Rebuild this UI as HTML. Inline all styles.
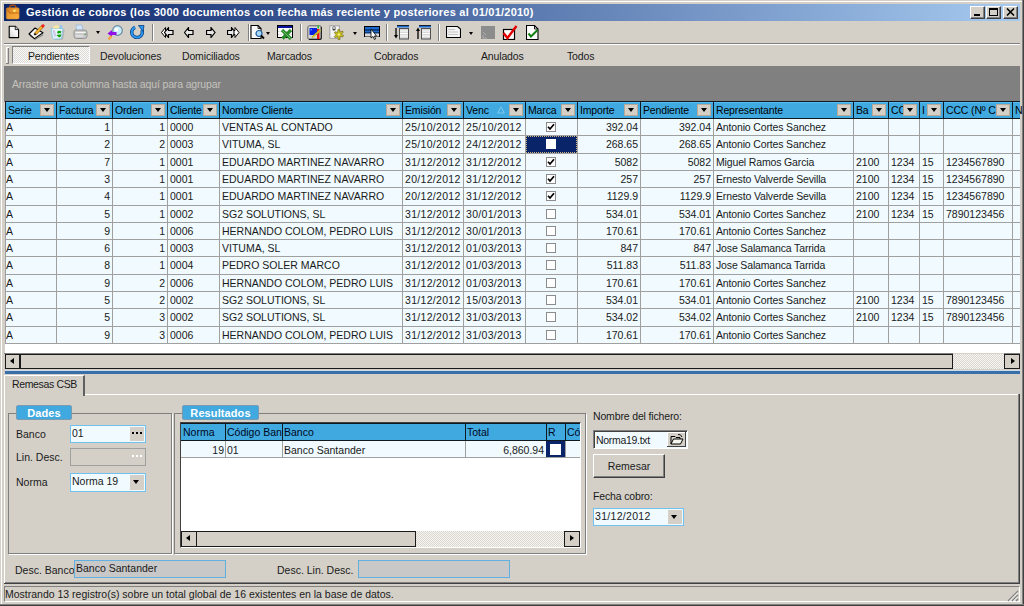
<!DOCTYPE html><html><head><meta charset="utf-8"><style>
*{box-sizing:border-box;margin:0;padding:0}
html,body{width:1024px;height:606px;overflow:hidden;background:#D4D0C8;font-family:"Liberation Sans", sans-serif;font-size:10.5px;color:#1a1a1a}
.d{letter-spacing:0.3px}
.l{letter-spacing:-0.15px}
.a{position:absolute}
.t{position:absolute;white-space:nowrap;line-height:12px}
.r3{border-top:1px solid #fff;border-left:1px solid #fff;border-right:1px solid #404040;border-bottom:1px solid #404040;background:#D4D0C8;box-shadow:inset -1px -1px 0 #808080}
.dd{position:absolute;background:#D4D0C8;border-top:1px solid #fff;border-left:1px solid #fff;border-right:1px solid #808080;border-bottom:1px solid #808080}
.dd:after{content:"";position:absolute;left:3px;top:4px;border-left:4px solid transparent;border-right:4px solid transparent;border-top:4px solid #000}
</style></head><body>

<div class="a" style="left:1px;top:1px;width:1022px;height:1px;background:#fff"></div>
<div class="a" style="left:1px;top:1px;width:1px;height:604px;background:#fff"></div>
<div class="a" style="left:1022px;top:0;width:1px;height:606px;background:#808080"></div>
<div class="a" style="left:1023px;top:0;width:1px;height:606px;background:#404040"></div>
<div class="a" style="left:0;top:604px;width:1024px;height:1px;background:#808080"></div>
<div class="a" style="left:0;top:605px;width:1024px;height:1px;background:#404040"></div>
<div class="a" style="left:4px;top:4px;width:1016px;height:17px;background:linear-gradient(to right,#0A246A,#A6CAF0)"></div>
<svg class="a" style="left:5px;top:4px" width="15" height="16" viewBox="0 0 15 16">
<defs><linearGradient id="bg1" x1="0" y1="0" x2="1" y2="1"><stop offset="0" stop-color="#d07820"/><stop offset="0.5" stop-color="#f0a030"/><stop offset="1" stop-color="#ffb040"/></linearGradient></defs>
<path d="M4.8 4.5 V2.8 Q4.8 1.2 6.5 1.2 H9 Q10.8 1.2 10.8 2.8 V4.5" fill="none" stroke="#a04810" stroke-width="1.5"/>
<rect x="1.3" y="3.8" width="12.8" height="11.2" rx="1.5" fill="url(#bg1)"/>
<path d="M1.5 5 L5 9 H14" fill="none" stroke="#b86010" stroke-width="0.8"/>
<rect x="1.3" y="3.8" width="12.8" height="11.2" rx="1.5" fill="none" stroke="#c88838" stroke-width="0.6"/>
<circle cx="9.5" cy="6.8" r="1.2" fill="#fff080"/>
</svg>
<div class="t" style="left:26px;top:6px;color:#fff;font-weight:bold;font-size:11px;line-height:13px;letter-spacing:0.24px">Gestión de cobros (los 3000 documentos con fecha más reciente y posteriores al 01/01/2010)</div>
<div class="a r3" style="left:970px;top:6px;width:15px;height:13px"></div>
<div class="a r3" style="left:986px;top:6px;width:15px;height:13px"></div>
<div class="a r3" style="left:1003px;top:6px;width:15px;height:13px"></div>
<div class="a" style="left:974px;top:14px;width:6px;height:2px;background:#000"></div>
<div class="a" style="left:989px;top:8px;width:9px;height:8px;border:1px solid #000;border-top-width:2px"></div>
<svg class="a" style="left:1006px;top:8px" width="9" height="8" viewBox="0 0 9 8"><path d="M1 0.5 L8 7.5 M8 0.5 L1 7.5" stroke="#000" stroke-width="1.6"/></svg>
<svg class="a" style="left:8px;top:25px" width="12" height="14" viewBox="0 0 12 14"><defs><linearGradient id="ng" x1="0" y1="1" x2="1" y2="0"><stop offset="0" stop-color="#d0d0d0"/><stop offset="0.5" stop-color="#f4f4f4"/><stop offset="1" stop-color="#fff"/></linearGradient></defs><path d="M1.2 1.2 H7.2 L10.6 4.6 V12.6 H1.2 Z" fill="url(#ng)" stroke="#000" stroke-width="1.1" stroke-linejoin="round"/><path d="M7.2 1.2 V4.6 H10.6" fill="#c8c8c8" stroke="#000" stroke-width="0.8"/></svg>
<svg class="a" style="left:28px;top:24px" width="17" height="16" viewBox="0 0 17 16"><path d="M2 11.5 L7 15 L15.5 10 L15 11.5 L7 16 L1.5 12 Z" fill="#808080"/><path d="M1 10 L7 4 L15 8.8 L6.5 14.6 Z" fill="#f4f4f4" stroke="#000" stroke-width="1.1" stroke-linejoin="round"/><path d="M7.2 10 L14.6 2.2" stroke="#b06010" stroke-width="3"/><path d="M7.2 10 L14.6 2.2" stroke="#f0c030" stroke-width="1.8"/><path d="M13.8 3 L16 0.8" stroke="#f02020" stroke-width="2.6"/><path d="M6.4 10.8 L7.6 9.6" stroke="#000" stroke-width="1.8"/></svg>
<svg class="a" style="left:50px;top:24px" width="16" height="16" viewBox="0 0 16 16"><path d="M1.5 5 H13.5 L12 14.5 Q11.5 15.5 10 15.5 H5 Q3.5 15.5 3 14.5 Z" fill="#5a6a7a" opacity="0.25" transform="translate(1.2,0.5)"/><path d="M1 4.5 H13 L11.5 14 Q11 15 9.5 15 H4.5 Q3 15 2.5 14 Z" fill="#e4f6fc" stroke="#90c8e8" stroke-width="1"/><path d="M3 3.5 Q5 0.5 8.5 1.5 L9 4.5 H3 Z" fill="#f8e8a0"/><path d="M9.5 4.5 L10 1 L12.5 1.5 L12 4.5 Z" fill="#90c8f0"/><path d="M3 6 L5 13 M4 6 L6 12" stroke="#c0b0e0" stroke-width="0.8"/><path d="M7 8 Q9 6 11.5 7.5 L10.5 9.5 Q9 8.5 8 10 Z M6.5 11 L9 13.5 Q11 13 11.5 10.5 L9.5 10.5 Z" fill="#10a010"/></svg>
<svg class="a" style="left:73px;top:24px" width="15" height="16" viewBox="0 0 15 16"><path d="M3 1 H9 L10 6.5 H3.5 Z" fill="#d0e4fc" stroke="#a0b8d8" stroke-width="0.8"/><path d="M1 7.5 Q1 6 3 6 H11.5 Q14 6 14 8.5 V12 Q14 14.5 11.5 14.5 H3.5 Q1 14.5 1 12 Z" fill="#c8c8c8" stroke="#8c8c8c" stroke-width="0.9"/><path d="M2.5 8.5 H12.5" stroke="#f4f4f4" stroke-width="1.2"/><path d="M2.5 12 H10" stroke="#f0f0f0" stroke-width="1"/><rect x="11.5" y="9.5" width="1.5" height="1.5" fill="#60a060"/></svg>
<div class="a" style="left:96px;top:31px;width:0;height:0;border-left:2.5px solid transparent;border-right:2.5px solid transparent;border-top:3px solid #000"></div>
<svg class="a" style="left:107px;top:25px" width="16" height="15" viewBox="0 0 16 15"><circle cx="10.5" cy="5.5" r="4.8" fill="#c8ecfa" stroke="#6a8aa0" stroke-width="1.2"/><circle cx="9.5" cy="4.5" r="2" fill="#fff"/><path d="M0.5 8.5 L5 5 V7 H9.5 V10 H5 V12 Z" fill="#9010e8"/><path d="M4.5 11 L1.5 14.5" stroke="#f0a040" stroke-width="2.4"/></svg>
<svg class="a" style="left:130px;top:25px" width="15" height="14" viewBox="0 0 15 14"><path d="M5.1 2.3 A5.3 5.3 0 1 0 11.8 4.9" fill="none" stroke="#0a3a80" stroke-width="3.4"/><path d="M5.1 2.3 A5.3 5.3 0 1 0 11.8 4.9" fill="none" stroke="#2a9af0" stroke-width="2"/><path d="M8.5 0.5 L14 0.5 L13 6.5 Z" fill="#2a9af0" stroke="#0a3a80" stroke-width="0.8"/></svg>
<div class="a" style="left:152px;top:24px;width:1px;height:17px;background:#808080"></div><div class="a" style="left:153px;top:24px;width:1px;height:17px;background:#fff"></div>
<svg class="a" style="left:161px;top:27px" width="13" height="11" viewBox="0 0 13 11"><path d="M4.5 0.5 L0.5 5.5 L4.5 10.5 V7.5 H6 V3.5 H4.5 Z" fill="#fff" stroke="#000" stroke-width="1"/><path d="M7.5 0.5 L3.5 5.5 L7.5 10.5 V7.5 H12 V3.5 H7.5 Z" fill="#e8e8e8" stroke="#000" stroke-width="1.2"/></svg>
<svg class="a" style="left:184px;top:27px" width="10" height="11" viewBox="0 0 10 11"><path d="M4.5 0.5 L0.5 5.5 L4.5 10.5 V7.5 H9 V3.5 H4.5 Z" fill="#e8e8e8" stroke="#000" stroke-width="1.2"/></svg>
<svg class="a" style="left:206px;top:27px" width="10" height="11" viewBox="0 0 10 11"><path d="M5 0.5 L9 5.5 L5 10.5 V7.5 H0.5 V3.5 H5 Z" fill="#e8e8e8" stroke="#000" stroke-width="1.2"/></svg>
<svg class="a" style="left:227px;top:27px" width="13" height="11" viewBox="0 0 13 11"><path d="M4.5 0.5 L8.5 5.5 L4.5 10.5 V7.5 H0.5 V3.5 H4.5 Z" fill="#e8e8e8" stroke="#000" stroke-width="1.2"/><path d="M8 0.5 L12 5.5 L8 10.5 V7.5 H7 V3.5 H8 Z" fill="#fff" stroke="#000" stroke-width="1"/></svg>
<div class="a" style="left:248px;top:24px;width:1px;height:17px;background:#808080"></div><div class="a" style="left:249px;top:24px;width:1px;height:17px;background:#fff"></div>
<svg class="a" style="left:250px;top:25px" width="15" height="15" viewBox="0 0 15 15"><path d="M1 0.5 H8 L11 3.5 V13.5 H1 Z" fill="#f8f8f8" stroke="#000" stroke-width="1.1"/><path d="M8 0.5 V3.5 H11" fill="none" stroke="#000" stroke-width="0.8"/><circle cx="9" cy="8.5" r="3" fill="#a8d8f8" stroke="#2060a0" stroke-width="1.2"/><path d="M11 10.5 L14 13.5" stroke="#000" stroke-width="1.8"/></svg>
<div class="a" style="left:266px;top:32px;width:0;height:0;border-left:2.5px solid transparent;border-right:2.5px solid transparent;border-top:3px solid #000"></div>
<svg class="a" style="left:277px;top:25px" width="16" height="15" viewBox="0 0 16 15"><rect x="0.5" y="0.5" width="15" height="12" fill="#fff" stroke="#000" stroke-width="1"/><rect x="1" y="1" width="14" height="2" fill="#0a10a0"/><path d="M1 6.5 H15 M1 9.5 H15" stroke="#c8c8c8" stroke-width="0.8" stroke-dasharray="1.5 1"/><path d="M5 5 L14 14 M14 5 L5.5 13.5" stroke="#2a8a2a" stroke-width="3.2"/><path d="M5.5 5.5 L13.5 13.5" stroke="#70c070" stroke-width="1"/></svg>
<div class="a" style="left:300px;top:24px;width:1px;height:17px;background:#808080"></div><div class="a" style="left:301px;top:24px;width:1px;height:17px;background:#fff"></div>
<svg class="a" style="left:307px;top:25px" width="15" height="15" viewBox="0 0 15 15"><rect x="0.8" y="0.8" width="13.5" height="13.5" rx="1.5" fill="#d8d8d8" stroke="#606060" stroke-width="1"/><path d="M14.3 2 V13 Q14.3 14.3 13 14.3 H2" fill="none" stroke="#202020" stroke-width="1.2"/><rect x="2.5" y="3" width="7.5" height="7" fill="#0a20e0"/><rect x="3.5" y="4" width="1.5" height="1.5" fill="#40a0ff"/><path d="M10 4 L12.5 4 L12.5 14 L10 14 Z" fill="#f01010"/><path d="M10.5 0.5 L12 0.5 L12 3.5 L10.5 3.5 Z" fill="#20c020"/><path d="M5 12.5 L13.5 5" stroke="#c8c020" stroke-width="1.8"/></svg>
<svg class="a" style="left:329px;top:25px" width="15" height="16" viewBox="0 0 15 16"><rect x="0.8" y="0.8" width="9.5" height="12.5" fill="#f4f4f4" stroke="#a0a0a0" stroke-width="1"/><rect x="3.5" y="1.5" width="3" height="4" rx="1" fill="#404040"/><circle cx="5" cy="3" r="0.9" fill="#fff"/><g fill="#c8c020" stroke="#686010" stroke-width="0.6"><path d="M9 4.5 L10.5 4.5 L11 7 L13.5 6 L14.3 7.3 L12.3 9 L14.5 10.5 L13.8 12 L11.2 11.3 L11 14.5 L9.2 14.5 L8.7 11.7 L6.2 12.8 L5.3 11.5 L7.3 9.7 L5.3 8 L6.2 6.7 L8.5 7.5 Z"/></g><circle cx="9.9" cy="9.6" r="1.2" fill="#f8f080"/></svg>
<div class="a" style="left:353px;top:32px;width:0;height:0;border-left:2.5px solid transparent;border-right:2.5px solid transparent;border-top:3px solid #000"></div>
<svg class="a" style="left:364px;top:26px" width="16" height="14" viewBox="0 0 16 14"><rect x="0.5" y="0.5" width="15" height="10" fill="#1a6ad0" stroke="#000" stroke-width="1"/><path d="M1 4 H15 M1 7 H15" stroke="#000" stroke-width="0.8"/><rect x="1" y="7.5" width="14" height="3" fill="#d8d8d8"/><path d="M7 3 V12 L9 10.5 L10.5 13.5 L11.5 13 L10.5 10 H12.5 Z" fill="#fff" stroke="#000" stroke-width="0.8"/></svg>
<div class="a" style="left:386px;top:24px;width:1px;height:17px;background:#808080"></div><div class="a" style="left:387px;top:24px;width:1px;height:17px;background:#fff"></div>
<svg class="a" style="left:394px;top:25px" width="15" height="15" viewBox="0 0 15 15"><rect x="3" y="0.5" width="12" height="2" fill="#1a6ad0"/><rect x="3" y="0" width="12" height="0.8" fill="#000"/><rect x="5.5" y="3.5" width="9" height="10.5" fill="#d8d8d8" stroke="#505050" stroke-width="1"/><path d="M6 6 H14 M6 8.5 H14 M6 11 H14" stroke="#fff" stroke-width="1"/><path d="M2 3 V12" stroke="#000" stroke-width="1.3"/><path d="M0 10 L2 13.5 L4 10 Z" fill="#000"/></svg>
<svg class="a" style="left:416px;top:25px" width="15" height="15" viewBox="0 0 15 15"><rect x="3" y="0.5" width="12" height="2" fill="#1a6ad0"/><rect x="3" y="0" width="12" height="0.8" fill="#000"/><rect x="5.5" y="3.5" width="9" height="10.5" fill="#d8d8d8" stroke="#505050" stroke-width="1"/><path d="M6 6 H14 M6 8.5 H14 M6 11 H14" stroke="#fff" stroke-width="1"/><path d="M2 5 V14" stroke="#000" stroke-width="1.3"/><path d="M0 6 L2 2.5 L4 6 Z" fill="#000"/></svg>
<div class="a" style="left:438px;top:24px;width:1px;height:17px;background:#808080"></div><div class="a" style="left:439px;top:24px;width:1px;height:17px;background:#fff"></div>
<svg class="a" style="left:446px;top:26px" width="15" height="12" viewBox="0 0 15 12"><path d="M0.5 0.5 H11.5 L14.5 3 V11.5 H0.5 Z" fill="#f4f4f4" stroke="#000" stroke-width="1.1"/><path d="M2 3.5 H9 M2 6 H12 M2 8.5 H12" stroke="#b8b8b8" stroke-width="0.8"/></svg>
<div class="a" style="left:469px;top:32px;width:0;height:0;border-left:2.5px solid transparent;border-right:2.5px solid transparent;border-top:3px solid #000"></div>
<div class="a" style="left:481px;top:26px;width:14px;height:13px;background:#8c8c8c"></div>
<svg class="a" style="left:481px;top:26px" width="14" height="13" viewBox="0 0 14 13"><path d="M2 6 L5 9 M2 9 V12 H6" stroke="#b0b0b0" stroke-width="1" fill="none"/></svg>
<svg class="a" style="left:502px;top:25px" width="16" height="15" viewBox="0 0 16 15"><rect x="1.5" y="4.5" width="11" height="10" fill="#fff" stroke="#000" stroke-width="1.2"/><path d="M1.5 8 L5.5 13 L14.5 1" fill="none" stroke="#e00000" stroke-width="2.4"/></svg>
<svg class="a" style="left:526px;top:25px" width="13" height="15" viewBox="0 0 13 15"><path d="M0.5 0.5 H8.5 L12 4 V14.5 H0.5 Z" fill="#fff" stroke="#000" stroke-width="1.1"/><path d="M8.5 0.5 V4 H12" fill="none" stroke="#000" stroke-width="0.9"/><path d="M2.5 8.5 L5 11.5 L11.5 5" fill="none" stroke="#108010" stroke-width="2"/></svg>
<div class="a" style="left:4px;top:43px;width:1016px;height:1px;background:#808080"></div><div class="a" style="left:4px;top:44px;width:1016px;height:1px;background:#fff"></div>
<div class="a" style="left:6px;top:47px;width:1px;height:17px;background:#fff"></div><div class="a" style="left:8px;top:47px;width:1px;height:17px;background:#808080"></div><div class="a" style="left:6px;top:63px;width:3px;height:1px;background:#808080"></div><div class="a" style="left:6px;top:47px;width:3px;height:1px;background:#fff"></div>
<div class="a" style="left:12px;top:46px;width:78px;height:18px;border-top:1px solid #808080;border-left:1px solid #808080;border-bottom:1px solid #fff;border-right:1px solid #fff;background-color:#E8E6E2;background-image:repeating-conic-gradient(#F8F8F6 0 25%,#DDDBD5 0 50%);background-size:2px 2px"></div>
<div class="t l" style="left:28px;top:50px;width:54px;font-size:10.5px">Pendientes</div>
<div class="t l" style="left:100px;top:50px;width:66px;font-size:10.5px">Devoluciones</div>
<div class="t l" style="left:182px;top:50px;width:61px;font-size:10.5px">Domiciliados</div>
<div class="t l" style="left:267px;top:50px;width:48px;font-size:10.5px">Marcados</div>
<div class="t l" style="left:374px;top:50px;width:47px;font-size:10.5px">Cobrados</div>
<div class="t l" style="left:481px;top:50px;width:47px;font-size:10.5px">Anulados</div>
<div class="t l" style="left:567px;top:50px;width:32px;font-size:10.5px">Todos</div>
<div class="a" style="left:4px;top:66px;width:1016px;height:36px;background:#808080"></div>
<div class="t l" style="left:12px;top:78px;color:#C4C2BC;font-size:10.5px">Arrastre una columna hasta aquí para agrupar</div>
<div class="a" style="left:5px;top:101px;width:1015px;height:18px;background:#40A9E0;border-top:1px solid #101820;border-bottom:1px solid #101820"></div>
<div class="a" style="left:5px;top:102px;width:1015px;height:1px;background:#58BDF2"></div>
<div class="a" style="left:5px;top:119px;width:1015px;height:234px;background:#fff"></div>
<div class="a" style="left:5px;top:119px;width:1015px;height:225px;background:#F0FAFF"></div>
<div class="a" style="left:5px;top:135px;width:1015px;height:1px;background:#A0A0A0"></div>
<div class="a" style="left:5px;top:153px;width:1015px;height:1px;background:#A0A0A0"></div>
<div class="a" style="left:5px;top:170px;width:1015px;height:1px;background:#A0A0A0"></div>
<div class="a" style="left:5px;top:187px;width:1015px;height:1px;background:#A0A0A0"></div>
<div class="a" style="left:5px;top:205px;width:1015px;height:1px;background:#A0A0A0"></div>
<div class="a" style="left:5px;top:222px;width:1015px;height:1px;background:#A0A0A0"></div>
<div class="a" style="left:5px;top:239px;width:1015px;height:1px;background:#A0A0A0"></div>
<div class="a" style="left:5px;top:256px;width:1015px;height:1px;background:#A0A0A0"></div>
<div class="a" style="left:5px;top:274px;width:1015px;height:1px;background:#A0A0A0"></div>
<div class="a" style="left:5px;top:291px;width:1015px;height:1px;background:#A0A0A0"></div>
<div class="a" style="left:5px;top:308px;width:1015px;height:1px;background:#A0A0A0"></div>
<div class="a" style="left:5px;top:326px;width:1015px;height:1px;background:#A0A0A0"></div>
<div class="a" style="left:5px;top:343px;width:1015px;height:1px;background:#A0A0A0"></div>
<div class="a" style="left:5px;top:102px;width:1px;height:16px;background:#101820"></div>
<div class="a" style="left:5px;top:119px;width:1px;height:225px;background:#A0A0A0"></div>
<div class="a" style="left:56px;top:102px;width:1px;height:16px;background:#101820"></div>
<div class="a" style="left:56px;top:119px;width:1px;height:225px;background:#A0A0A0"></div>
<div class="a" style="left:112px;top:102px;width:1px;height:16px;background:#101820"></div>
<div class="a" style="left:112px;top:119px;width:1px;height:225px;background:#A0A0A0"></div>
<div class="a" style="left:167px;top:102px;width:1px;height:16px;background:#101820"></div>
<div class="a" style="left:167px;top:119px;width:1px;height:225px;background:#A0A0A0"></div>
<div class="a" style="left:219px;top:102px;width:1px;height:16px;background:#101820"></div>
<div class="a" style="left:219px;top:119px;width:1px;height:225px;background:#A0A0A0"></div>
<div class="a" style="left:402px;top:102px;width:1px;height:16px;background:#101820"></div>
<div class="a" style="left:402px;top:119px;width:1px;height:225px;background:#A0A0A0"></div>
<div class="a" style="left:463px;top:102px;width:1px;height:16px;background:#101820"></div>
<div class="a" style="left:463px;top:119px;width:1px;height:225px;background:#A0A0A0"></div>
<div class="a" style="left:525px;top:102px;width:1px;height:16px;background:#101820"></div>
<div class="a" style="left:525px;top:119px;width:1px;height:225px;background:#A0A0A0"></div>
<div class="a" style="left:577px;top:102px;width:1px;height:16px;background:#101820"></div>
<div class="a" style="left:577px;top:119px;width:1px;height:225px;background:#A0A0A0"></div>
<div class="a" style="left:640px;top:102px;width:1px;height:16px;background:#101820"></div>
<div class="a" style="left:640px;top:119px;width:1px;height:225px;background:#A0A0A0"></div>
<div class="a" style="left:713px;top:102px;width:1px;height:16px;background:#101820"></div>
<div class="a" style="left:713px;top:119px;width:1px;height:225px;background:#A0A0A0"></div>
<div class="a" style="left:853px;top:102px;width:1px;height:16px;background:#101820"></div>
<div class="a" style="left:853px;top:119px;width:1px;height:225px;background:#A0A0A0"></div>
<div class="a" style="left:888px;top:102px;width:1px;height:16px;background:#101820"></div>
<div class="a" style="left:888px;top:119px;width:1px;height:225px;background:#A0A0A0"></div>
<div class="a" style="left:919px;top:102px;width:1px;height:16px;background:#101820"></div>
<div class="a" style="left:919px;top:119px;width:1px;height:225px;background:#A0A0A0"></div>
<div class="a" style="left:943px;top:102px;width:1px;height:16px;background:#101820"></div>
<div class="a" style="left:943px;top:119px;width:1px;height:225px;background:#A0A0A0"></div>
<div class="a" style="left:1012px;top:102px;width:1px;height:16px;background:#101820"></div>
<div class="a" style="left:1012px;top:119px;width:1px;height:225px;background:#A0A0A0"></div>
<div class="t l" style="left:8px;top:104px;width:32px;overflow:hidden;color:#000">Serie</div>
<div class="a" style="left:40px;top:104px;width:14px;height:12px;background:#D4D0C8;border:1px solid #B8A898"></div>
<div class="a" style="left:44px;top:108px;width:0;height:0;border-left:3.5px solid transparent;border-right:3.5px solid transparent;border-top:4px solid #000"></div>
<div class="t l" style="left:59px;top:104px;width:37px;overflow:hidden;color:#000">Factura</div>
<div class="a" style="left:96px;top:104px;width:14px;height:12px;background:#D4D0C8;border:1px solid #B8A898"></div>
<div class="a" style="left:100px;top:108px;width:0;height:0;border-left:3.5px solid transparent;border-right:3.5px solid transparent;border-top:4px solid #000"></div>
<div class="t l" style="left:115px;top:104px;width:36px;overflow:hidden;color:#000">Orden</div>
<div class="a" style="left:151px;top:104px;width:14px;height:12px;background:#D4D0C8;border:1px solid #B8A898"></div>
<div class="a" style="left:155px;top:108px;width:0;height:0;border-left:3.5px solid transparent;border-right:3.5px solid transparent;border-top:4px solid #000"></div>
<div class="t l" style="left:170px;top:104px;width:33px;overflow:hidden;color:#000">Cliente</div>
<div class="a" style="left:203px;top:104px;width:14px;height:12px;background:#D4D0C8;border:1px solid #B8A898"></div>
<div class="a" style="left:207px;top:108px;width:0;height:0;border-left:3.5px solid transparent;border-right:3.5px solid transparent;border-top:4px solid #000"></div>
<div class="t l" style="left:222px;top:104px;width:164px;overflow:hidden;color:#000">Nombre Cliente</div>
<div class="a" style="left:386px;top:104px;width:14px;height:12px;background:#D4D0C8;border:1px solid #B8A898"></div>
<div class="a" style="left:390px;top:108px;width:0;height:0;border-left:3.5px solid transparent;border-right:3.5px solid transparent;border-top:4px solid #000"></div>
<div class="t l" style="left:405px;top:104px;width:42px;overflow:hidden;color:#000">Emisión</div>
<div class="a" style="left:447px;top:104px;width:14px;height:12px;background:#D4D0C8;border:1px solid #B8A898"></div>
<div class="a" style="left:451px;top:108px;width:0;height:0;border-left:3.5px solid transparent;border-right:3.5px solid transparent;border-top:4px solid #000"></div>
<div class="t l" style="left:466px;top:104px;width:43px;overflow:hidden;color:#000">Venc</div>
<div class="a" style="left:509px;top:104px;width:14px;height:12px;background:#D4D0C8;border:1px solid #B8A898"></div>
<div class="a" style="left:513px;top:108px;width:0;height:0;border-left:3.5px solid transparent;border-right:3.5px solid transparent;border-top:4px solid #000"></div>
<div class="t l" style="left:528px;top:104px;width:33px;overflow:hidden;color:#000">Marca</div>
<div class="a" style="left:561px;top:104px;width:14px;height:12px;background:#D4D0C8;border:1px solid #B8A898"></div>
<div class="a" style="left:565px;top:108px;width:0;height:0;border-left:3.5px solid transparent;border-right:3.5px solid transparent;border-top:4px solid #000"></div>
<div class="t l" style="left:580px;top:104px;width:44px;overflow:hidden;color:#000">Importe</div>
<div class="a" style="left:624px;top:104px;width:14px;height:12px;background:#D4D0C8;border:1px solid #B8A898"></div>
<div class="a" style="left:628px;top:108px;width:0;height:0;border-left:3.5px solid transparent;border-right:3.5px solid transparent;border-top:4px solid #000"></div>
<div class="t l" style="left:643px;top:104px;width:54px;overflow:hidden;color:#000">Pendiente</div>
<div class="a" style="left:697px;top:104px;width:14px;height:12px;background:#D4D0C8;border:1px solid #B8A898"></div>
<div class="a" style="left:701px;top:108px;width:0;height:0;border-left:3.5px solid transparent;border-right:3.5px solid transparent;border-top:4px solid #000"></div>
<div class="t l" style="left:716px;top:104px;width:121px;overflow:hidden;color:#000">Representante</div>
<div class="a" style="left:837px;top:104px;width:14px;height:12px;background:#D4D0C8;border:1px solid #B8A898"></div>
<div class="a" style="left:841px;top:108px;width:0;height:0;border-left:3.5px solid transparent;border-right:3.5px solid transparent;border-top:4px solid #000"></div>
<div class="t l" style="left:856px;top:104px;width:16px;overflow:hidden;color:#000">Ba</div>
<div class="a" style="left:872px;top:104px;width:14px;height:12px;background:#D4D0C8;border:1px solid #B8A898"></div>
<div class="a" style="left:876px;top:108px;width:0;height:0;border-left:3.5px solid transparent;border-right:3.5px solid transparent;border-top:4px solid #000"></div>
<div class="t l" style="left:891px;top:104px;width:12px;overflow:hidden;color:#000">CC</div>
<div class="a" style="left:903px;top:104px;width:14px;height:12px;background:#D4D0C8;border:1px solid #B8A898"></div>
<div class="a" style="left:907px;top:108px;width:0;height:0;border-left:3.5px solid transparent;border-right:3.5px solid transparent;border-top:4px solid #000"></div>
<div class="t l" style="left:922px;top:104px;width:8px;overflow:hidden;color:#000">I</div>
<div class="a" style="left:927px;top:104px;width:14px;height:12px;background:#D4D0C8;border:1px solid #B8A898"></div>
<div class="a" style="left:931px;top:108px;width:0;height:0;border-left:3.5px solid transparent;border-right:3.5px solid transparent;border-top:4px solid #000"></div>
<div class="t l" style="left:946px;top:104px;width:50px;overflow:hidden;color:#000">CCC (Nº C</div>
<div class="a" style="left:996px;top:104px;width:14px;height:12px;background:#D4D0C8;border:1px solid #B8A898"></div>
<div class="a" style="left:1000px;top:108px;width:0;height:0;border-left:3.5px solid transparent;border-right:3.5px solid transparent;border-top:4px solid #000"></div>
<div class="t l" style="left:1015px;top:104px;width:8px;overflow:hidden;color:#000">N</div>
<svg class="a" style="left:497px;top:106px" width="8" height="8" viewBox="0 0 8 8"><path d="M4 0.8 L7.3 7 H0.7 Z" fill="none" stroke="#7ec8ec" stroke-width="1"/></svg>
<div class="t" style="left:6px;top:121px;width:49px;overflow:hidden">A</div>
<div class="t" style="left:56px;top:121px;width:54px;text-align:right">1</div>
<div class="t" style="left:112px;top:121px;width:53px;text-align:right">1</div>
<div class="t" style="left:170px;top:121px;width:48px;overflow:hidden">0000</div>
<div class="t" style="left:222px;top:121px;width:179px;overflow:hidden">VENTAS AL CONTADO</div>
<div class="t d" style="left:405px;top:121px;width:57px;overflow:hidden">25/10/2012</div>
<div class="t d" style="left:466px;top:121px;width:58px;overflow:hidden">25/10/2012</div>
<div class="a" style="left:546px;top:122px;width:10px;height:10px;background:#fff;border:1px solid #8c8c8c"></div>
<svg class="a" style="left:547px;top:123px" width="8" height="8" viewBox="0 0 8 8"><path d="M1 3.8 L3 6 L7 1.2" fill="none" stroke="#000" stroke-width="1.7"/></svg>
<div class="t" style="left:577px;top:121px;width:61px;text-align:right">392.04</div>
<div class="t" style="left:640px;top:121px;width:71px;text-align:right">392.04</div>
<div class="t l" style="left:716px;top:121px;width:136px;overflow:hidden">Antonio Cortes Sanchez</div>
<div class="t" style="left:6px;top:138px;width:49px;overflow:hidden">A</div>
<div class="t" style="left:56px;top:138px;width:54px;text-align:right">2</div>
<div class="t" style="left:112px;top:138px;width:53px;text-align:right">2</div>
<div class="t" style="left:170px;top:138px;width:48px;overflow:hidden">0003</div>
<div class="t" style="left:222px;top:138px;width:179px;overflow:hidden">VITUMA, SL</div>
<div class="t d" style="left:405px;top:138px;width:57px;overflow:hidden">25/10/2012</div>
<div class="t d" style="left:466px;top:138px;width:58px;overflow:hidden">24/12/2012</div>
<div class="a" style="left:526px;top:136px;width:51px;height:17px;background:#0A246A;outline:1px dotted #C8B480;outline-offset:-1px"></div>
<div class="a" style="left:546px;top:139px;width:10px;height:10px;background:#fff"></div>
<div class="t" style="left:577px;top:138px;width:61px;text-align:right">268.65</div>
<div class="t" style="left:640px;top:138px;width:71px;text-align:right">268.65</div>
<div class="t l" style="left:716px;top:138px;width:136px;overflow:hidden">Antonio Cortes Sanchez</div>
<div class="t" style="left:6px;top:156px;width:49px;overflow:hidden">A</div>
<div class="t" style="left:56px;top:156px;width:54px;text-align:right">7</div>
<div class="t" style="left:112px;top:156px;width:53px;text-align:right">1</div>
<div class="t" style="left:170px;top:156px;width:48px;overflow:hidden">0001</div>
<div class="t" style="left:222px;top:156px;width:179px;overflow:hidden">EDUARDO MARTINEZ NAVARRO</div>
<div class="t d" style="left:405px;top:156px;width:57px;overflow:hidden">31/12/2012</div>
<div class="t d" style="left:466px;top:156px;width:58px;overflow:hidden">31/12/2012</div>
<div class="a" style="left:546px;top:157px;width:10px;height:10px;background:#fff;border:1px solid #8c8c8c"></div>
<svg class="a" style="left:547px;top:158px" width="8" height="8" viewBox="0 0 8 8"><path d="M1 3.8 L3 6 L7 1.2" fill="none" stroke="#000" stroke-width="1.7"/></svg>
<div class="t" style="left:577px;top:156px;width:61px;text-align:right">5082</div>
<div class="t" style="left:640px;top:156px;width:71px;text-align:right">5082</div>
<div class="t l" style="left:716px;top:156px;width:136px;overflow:hidden">Miguel Ramos Garcia</div>
<div class="t" style="left:856px;top:156px;width:31px;overflow:hidden">2100</div>
<div class="t" style="left:891px;top:156px;width:27px;overflow:hidden">1234</div>
<div class="t" style="left:922px;top:156px;width:20px;overflow:hidden">15</div>
<div class="t" style="left:946px;top:156px;width:65px;overflow:hidden">1234567890</div>
<div class="t" style="left:6px;top:173px;width:49px;overflow:hidden">A</div>
<div class="t" style="left:56px;top:173px;width:54px;text-align:right">3</div>
<div class="t" style="left:112px;top:173px;width:53px;text-align:right">1</div>
<div class="t" style="left:170px;top:173px;width:48px;overflow:hidden">0001</div>
<div class="t" style="left:222px;top:173px;width:179px;overflow:hidden">EDUARDO MARTINEZ NAVARRO</div>
<div class="t d" style="left:405px;top:173px;width:57px;overflow:hidden">20/12/2012</div>
<div class="t d" style="left:466px;top:173px;width:58px;overflow:hidden">31/12/2012</div>
<div class="a" style="left:546px;top:174px;width:10px;height:10px;background:#fff;border:1px solid #8c8c8c"></div>
<svg class="a" style="left:547px;top:175px" width="8" height="8" viewBox="0 0 8 8"><path d="M1 3.8 L3 6 L7 1.2" fill="none" stroke="#000" stroke-width="1.7"/></svg>
<div class="t" style="left:577px;top:173px;width:61px;text-align:right">257</div>
<div class="t" style="left:640px;top:173px;width:71px;text-align:right">257</div>
<div class="t l" style="left:716px;top:173px;width:136px;overflow:hidden">Ernesto Valverde Sevilla</div>
<div class="t" style="left:856px;top:173px;width:31px;overflow:hidden">2100</div>
<div class="t" style="left:891px;top:173px;width:27px;overflow:hidden">1234</div>
<div class="t" style="left:922px;top:173px;width:20px;overflow:hidden">15</div>
<div class="t" style="left:946px;top:173px;width:65px;overflow:hidden">1234567890</div>
<div class="t" style="left:6px;top:190px;width:49px;overflow:hidden">A</div>
<div class="t" style="left:56px;top:190px;width:54px;text-align:right">4</div>
<div class="t" style="left:112px;top:190px;width:53px;text-align:right">1</div>
<div class="t" style="left:170px;top:190px;width:48px;overflow:hidden">0001</div>
<div class="t" style="left:222px;top:190px;width:179px;overflow:hidden">EDUARDO MARTINEZ NAVARRO</div>
<div class="t d" style="left:405px;top:190px;width:57px;overflow:hidden">20/12/2012</div>
<div class="t d" style="left:466px;top:190px;width:58px;overflow:hidden">31/12/2012</div>
<div class="a" style="left:546px;top:191px;width:10px;height:10px;background:#fff;border:1px solid #8c8c8c"></div>
<svg class="a" style="left:547px;top:192px" width="8" height="8" viewBox="0 0 8 8"><path d="M1 3.8 L3 6 L7 1.2" fill="none" stroke="#000" stroke-width="1.7"/></svg>
<div class="t" style="left:577px;top:190px;width:61px;text-align:right">1129.9</div>
<div class="t" style="left:640px;top:190px;width:71px;text-align:right">1129.9</div>
<div class="t l" style="left:716px;top:190px;width:136px;overflow:hidden">Ernesto Valverde Sevilla</div>
<div class="t" style="left:856px;top:190px;width:31px;overflow:hidden">2100</div>
<div class="t" style="left:891px;top:190px;width:27px;overflow:hidden">1234</div>
<div class="t" style="left:922px;top:190px;width:20px;overflow:hidden">15</div>
<div class="t" style="left:946px;top:190px;width:65px;overflow:hidden">1234567890</div>
<div class="t" style="left:6px;top:208px;width:49px;overflow:hidden">A</div>
<div class="t" style="left:56px;top:208px;width:54px;text-align:right">5</div>
<div class="t" style="left:112px;top:208px;width:53px;text-align:right">1</div>
<div class="t" style="left:170px;top:208px;width:48px;overflow:hidden">0002</div>
<div class="t" style="left:222px;top:208px;width:179px;overflow:hidden">SG2 SOLUTIONS, SL</div>
<div class="t d" style="left:405px;top:208px;width:57px;overflow:hidden">31/12/2012</div>
<div class="t d" style="left:466px;top:208px;width:58px;overflow:hidden">30/01/2013</div>
<div class="a" style="left:546px;top:209px;width:10px;height:10px;background:#fff;border:1px solid #8c8c8c"></div>
<div class="t" style="left:577px;top:208px;width:61px;text-align:right">534.01</div>
<div class="t" style="left:640px;top:208px;width:71px;text-align:right">534.01</div>
<div class="t l" style="left:716px;top:208px;width:136px;overflow:hidden">Antonio Cortes Sanchez</div>
<div class="t" style="left:856px;top:208px;width:31px;overflow:hidden">2100</div>
<div class="t" style="left:891px;top:208px;width:27px;overflow:hidden">1234</div>
<div class="t" style="left:922px;top:208px;width:20px;overflow:hidden">15</div>
<div class="t" style="left:946px;top:208px;width:65px;overflow:hidden">7890123456</div>
<div class="t" style="left:6px;top:225px;width:49px;overflow:hidden">A</div>
<div class="t" style="left:56px;top:225px;width:54px;text-align:right">9</div>
<div class="t" style="left:112px;top:225px;width:53px;text-align:right">1</div>
<div class="t" style="left:170px;top:225px;width:48px;overflow:hidden">0006</div>
<div class="t" style="left:222px;top:225px;width:179px;overflow:hidden">HERNANDO COLOM, PEDRO LUIS</div>
<div class="t d" style="left:405px;top:225px;width:57px;overflow:hidden">31/12/2012</div>
<div class="t d" style="left:466px;top:225px;width:58px;overflow:hidden">30/01/2013</div>
<div class="a" style="left:546px;top:226px;width:10px;height:10px;background:#fff;border:1px solid #8c8c8c"></div>
<div class="t" style="left:577px;top:225px;width:61px;text-align:right">170.61</div>
<div class="t" style="left:640px;top:225px;width:71px;text-align:right">170.61</div>
<div class="t l" style="left:716px;top:225px;width:136px;overflow:hidden">Antonio Cortes Sanchez</div>
<div class="t" style="left:6px;top:242px;width:49px;overflow:hidden">A</div>
<div class="t" style="left:56px;top:242px;width:54px;text-align:right">6</div>
<div class="t" style="left:112px;top:242px;width:53px;text-align:right">1</div>
<div class="t" style="left:170px;top:242px;width:48px;overflow:hidden">0003</div>
<div class="t" style="left:222px;top:242px;width:179px;overflow:hidden">VITUMA, SL</div>
<div class="t d" style="left:405px;top:242px;width:57px;overflow:hidden">31/12/2012</div>
<div class="t d" style="left:466px;top:242px;width:58px;overflow:hidden">01/03/2013</div>
<div class="a" style="left:546px;top:243px;width:10px;height:10px;background:#fff;border:1px solid #8c8c8c"></div>
<div class="t" style="left:577px;top:242px;width:61px;text-align:right">847</div>
<div class="t" style="left:640px;top:242px;width:71px;text-align:right">847</div>
<div class="t l" style="left:716px;top:242px;width:136px;overflow:hidden">Jose Salamanca Tarrida</div>
<div class="t" style="left:6px;top:259px;width:49px;overflow:hidden">A</div>
<div class="t" style="left:56px;top:259px;width:54px;text-align:right">8</div>
<div class="t" style="left:112px;top:259px;width:53px;text-align:right">1</div>
<div class="t" style="left:170px;top:259px;width:48px;overflow:hidden">0004</div>
<div class="t" style="left:222px;top:259px;width:179px;overflow:hidden">PEDRO SOLER MARCO</div>
<div class="t d" style="left:405px;top:259px;width:57px;overflow:hidden">31/12/2012</div>
<div class="t d" style="left:466px;top:259px;width:58px;overflow:hidden">01/03/2013</div>
<div class="a" style="left:546px;top:260px;width:10px;height:10px;background:#fff;border:1px solid #8c8c8c"></div>
<div class="t" style="left:577px;top:259px;width:61px;text-align:right">511.83</div>
<div class="t" style="left:640px;top:259px;width:71px;text-align:right">511.83</div>
<div class="t l" style="left:716px;top:259px;width:136px;overflow:hidden">Jose Salamanca Tarrida</div>
<div class="t" style="left:6px;top:277px;width:49px;overflow:hidden">A</div>
<div class="t" style="left:56px;top:277px;width:54px;text-align:right">9</div>
<div class="t" style="left:112px;top:277px;width:53px;text-align:right">2</div>
<div class="t" style="left:170px;top:277px;width:48px;overflow:hidden">0006</div>
<div class="t" style="left:222px;top:277px;width:179px;overflow:hidden">HERNANDO COLOM, PEDRO LUIS</div>
<div class="t d" style="left:405px;top:277px;width:57px;overflow:hidden">31/12/2012</div>
<div class="t d" style="left:466px;top:277px;width:58px;overflow:hidden">01/03/2013</div>
<div class="a" style="left:546px;top:278px;width:10px;height:10px;background:#fff;border:1px solid #8c8c8c"></div>
<div class="t" style="left:577px;top:277px;width:61px;text-align:right">170.61</div>
<div class="t" style="left:640px;top:277px;width:71px;text-align:right">170.61</div>
<div class="t l" style="left:716px;top:277px;width:136px;overflow:hidden">Antonio Cortes Sanchez</div>
<div class="t" style="left:6px;top:294px;width:49px;overflow:hidden">A</div>
<div class="t" style="left:56px;top:294px;width:54px;text-align:right">5</div>
<div class="t" style="left:112px;top:294px;width:53px;text-align:right">2</div>
<div class="t" style="left:170px;top:294px;width:48px;overflow:hidden">0002</div>
<div class="t" style="left:222px;top:294px;width:179px;overflow:hidden">SG2 SOLUTIONS, SL</div>
<div class="t d" style="left:405px;top:294px;width:57px;overflow:hidden">31/12/2012</div>
<div class="t d" style="left:466px;top:294px;width:58px;overflow:hidden">15/03/2013</div>
<div class="a" style="left:546px;top:295px;width:10px;height:10px;background:#fff;border:1px solid #8c8c8c"></div>
<div class="t" style="left:577px;top:294px;width:61px;text-align:right">534.01</div>
<div class="t" style="left:640px;top:294px;width:71px;text-align:right">534.01</div>
<div class="t l" style="left:716px;top:294px;width:136px;overflow:hidden">Antonio Cortes Sanchez</div>
<div class="t" style="left:856px;top:294px;width:31px;overflow:hidden">2100</div>
<div class="t" style="left:891px;top:294px;width:27px;overflow:hidden">1234</div>
<div class="t" style="left:922px;top:294px;width:20px;overflow:hidden">15</div>
<div class="t" style="left:946px;top:294px;width:65px;overflow:hidden">7890123456</div>
<div class="t" style="left:6px;top:311px;width:49px;overflow:hidden">A</div>
<div class="t" style="left:56px;top:311px;width:54px;text-align:right">5</div>
<div class="t" style="left:112px;top:311px;width:53px;text-align:right">3</div>
<div class="t" style="left:170px;top:311px;width:48px;overflow:hidden">0002</div>
<div class="t" style="left:222px;top:311px;width:179px;overflow:hidden">SG2 SOLUTIONS, SL</div>
<div class="t d" style="left:405px;top:311px;width:57px;overflow:hidden">31/12/2012</div>
<div class="t d" style="left:466px;top:311px;width:58px;overflow:hidden">31/03/2013</div>
<div class="a" style="left:546px;top:312px;width:10px;height:10px;background:#fff;border:1px solid #8c8c8c"></div>
<div class="t" style="left:577px;top:311px;width:61px;text-align:right">534.02</div>
<div class="t" style="left:640px;top:311px;width:71px;text-align:right">534.02</div>
<div class="t l" style="left:716px;top:311px;width:136px;overflow:hidden">Antonio Cortes Sanchez</div>
<div class="t" style="left:856px;top:311px;width:31px;overflow:hidden">2100</div>
<div class="t" style="left:891px;top:311px;width:27px;overflow:hidden">1234</div>
<div class="t" style="left:922px;top:311px;width:20px;overflow:hidden">15</div>
<div class="t" style="left:946px;top:311px;width:65px;overflow:hidden">7890123456</div>
<div class="t" style="left:6px;top:329px;width:49px;overflow:hidden">A</div>
<div class="t" style="left:56px;top:329px;width:54px;text-align:right">9</div>
<div class="t" style="left:112px;top:329px;width:53px;text-align:right">3</div>
<div class="t" style="left:170px;top:329px;width:48px;overflow:hidden">0006</div>
<div class="t" style="left:222px;top:329px;width:179px;overflow:hidden">HERNANDO COLOM, PEDRO LUIS</div>
<div class="t d" style="left:405px;top:329px;width:57px;overflow:hidden">31/12/2012</div>
<div class="t d" style="left:466px;top:329px;width:58px;overflow:hidden">31/03/2013</div>
<div class="a" style="left:546px;top:330px;width:10px;height:10px;background:#fff;border:1px solid #8c8c8c"></div>
<div class="t" style="left:577px;top:329px;width:61px;text-align:right">170.61</div>
<div class="t" style="left:640px;top:329px;width:71px;text-align:right">170.61</div>
<div class="t l" style="left:716px;top:329px;width:136px;overflow:hidden">Antonio Cortes Sanchez</div>
<div class="a" style="left:4px;top:353px;width:949px;height:1px;background:#808080"></div><div class="a" style="left:1004px;top:353px;width:16px;height:1px;background:#808080"></div>
<div class="a" style="left:5px;top:354px;width:1015px;height:15px;background-color:#E8E6E2;background-image:repeating-conic-gradient(#F6F5F2 0 25%,#DAD7D1 0 50%);background-size:2px 2px"></div>
<div class="a" style="left:5px;top:354px;width:15px;height:15px;background:#D4D0C8;border:1px solid #1a1a1a"></div>
<div class="a" style="left:20px;top:354px;width:933px;height:15px;background:#D4D0C8;border:1px solid #1a1a1a"></div>
<div class="a" style="left:1004px;top:354px;width:16px;height:15px;background:#D4D0C8;border:1px solid #1a1a1a"></div>
<div class="a" style="left:10px;top:358px;width:0;height:0;border-top:3.5px solid transparent;border-bottom:3.5px solid transparent;border-right:4px solid #000"></div>
<div class="a" style="left:1011px;top:358px;width:0;height:0;border-top:3.5px solid transparent;border-bottom:3.5px solid transparent;border-left:4px solid #000"></div>
<div class="a" style="left:5px;top:370px;width:1015px;height:1px;background:#C8DCEC"></div>
<div class="a" style="left:5px;top:371px;width:1015px;height:3px;background:#3A6EA8"></div>
<div class="a" style="left:4px;top:375px;width:81px;height:21px;border-top:1px solid #fff;border-left:1px solid #fff;border-right:2px solid #606060"></div>
<div class="t" style="left:12px;top:378px;letter-spacing:-0.35px">Remesas CSB</div>
<div class="a" style="left:85px;top:394px;width:935px;height:1px;background:#fff"></div>
<div class="a" style="left:4px;top:375px;width:1px;height:209px;background:#fff"></div>
<div class="a" style="left:1018px;top:394px;width:1px;height:189px;background:#808080"></div>
<div class="a" style="left:1019px;top:394px;width:1px;height:190px;background:#404040"></div>
<div class="a" style="left:5px;top:582px;width:1014px;height:1px;background:#808080"></div>
<div class="a" style="left:4px;top:583px;width:1016px;height:1px;background:#404040"></div>
<div class="a" style="left:8px;top:413px;width:164px;height:141px;border:1px solid #808080;box-shadow:1px 1px 0 #fff"></div>
<div class="a" style="left:16px;top:405px;width:56px;height:15px;background:#40A9E0;border-radius:2px;border:1px solid #7a9ab0"></div>
<div class="t" style="left:16px;top:406px;width:56px;text-align:center;color:#fff;font-weight:bold;font-size:11px;line-height:14px;letter-spacing:0.1px">Dades</div>
<div class="a" style="left:174px;top:413px;width:412px;height:141px;border:1px solid #808080;box-shadow:1px 1px 0 #fff"></div>
<div class="a" style="left:182px;top:405px;width:77px;height:15px;background:#40A9E0;border-radius:2px;border:1px solid #7a9ab0"></div>
<div class="t" style="left:182px;top:406px;width:77px;text-align:center;color:#fff;font-weight:bold;font-size:11px;line-height:14px;letter-spacing:0.1px">Resultados</div>
<div class="t" style="left:16px;top:428px">Banco</div>
<div class="a" style="left:70px;top:425px;width:76px;height:18px;background:#F0FAFF;border:1px solid #70C0F0"></div>
<div class="t" style="left:72px;top:427px;">01</div>
<div class="a" style="left:130px;top:427px;width:14px;height:14px;background:#D4D0C8"></div>
<div class="a" style="left:132px;top:432px;width:2px;height:2px;background:#000;box-shadow:4px 0 0 #000,8px 0 0 #000"></div>
<div class="t" style="left:16px;top:451px">Lin. Desc.</div>
<div class="a" style="left:70px;top:448px;width:76px;height:18px;background:#D4D0C8;border:1px solid #A0A0A0"></div>
<div class="a" style="left:130px;top:450px;width:14px;height:14px;background:#D4D0C8"></div>
<div class="a" style="left:132px;top:455px;width:2px;height:2px;background:#fff;box-shadow:4px 0 0 #fff,8px 0 0 #fff"></div>
<div class="t" style="left:16px;top:476px">Norma</div>
<div class="a" style="left:70px;top:473px;width:76px;height:19px;background:#F0FAFF;border:1px solid #70C0F0"></div>
<div class="t" style="left:72px;top:475px;">Norma 19</div>
<div class="a" style="left:130px;top:475px;width:14px;height:15px;background:#D4D0C8"></div>
<div class="a" style="left:133px;top:480px;width:0;height:0;border-left:3.5px solid transparent;border-right:3.5px solid transparent;border-top:4px solid #000"></div>
<div class="a" style="left:180px;top:422px;width:401px;height:126px;background:#fff;border:1px solid #404040;border-right-color:#fff;border-bottom-color:#fff"></div>
<div class="a" style="left:181px;top:423px;width:399px;height:18px;background:#40A9E0;border-top:1px solid #101820;border-bottom:1px solid #101820"></div>
<div class="a" style="left:181px;top:441px;width:399px;height:16px;background:#F0FAFF"></div>
<div class="a" style="left:181px;top:457px;width:399px;height:1px;background:#A0A0A0"></div>
<div class="t" style="left:183px;top:426px;width:42px;overflow:hidden;color:#000820">Norma</div>
<div class="a" style="left:225px;top:424px;width:1px;height:16px;background:#101820"></div>
<div class="a" style="left:225px;top:441px;width:1px;height:16px;background:#A0A0A0"></div>
<div class="t" style="left:227px;top:426px;width:55px;overflow:hidden;color:#000820">Código Ban</div>
<div class="a" style="left:282px;top:424px;width:1px;height:16px;background:#101820"></div>
<div class="a" style="left:282px;top:441px;width:1px;height:16px;background:#A0A0A0"></div>
<div class="t" style="left:284px;top:426px;width:181px;overflow:hidden;color:#000820">Banco</div>
<div class="a" style="left:465px;top:424px;width:1px;height:16px;background:#101820"></div>
<div class="a" style="left:465px;top:441px;width:1px;height:16px;background:#A0A0A0"></div>
<div class="t" style="left:467px;top:426px;width:79px;overflow:hidden;color:#000820">Total</div>
<div class="a" style="left:546px;top:424px;width:1px;height:16px;background:#101820"></div>
<div class="a" style="left:546px;top:441px;width:1px;height:16px;background:#A0A0A0"></div>
<div class="t" style="left:548px;top:426px;width:17px;overflow:hidden;color:#000820">R</div>
<div class="a" style="left:565px;top:424px;width:1px;height:16px;background:#101820"></div>
<div class="a" style="left:565px;top:441px;width:1px;height:16px;background:#A0A0A0"></div>
<div class="t" style="left:567px;top:426px;width:13px;overflow:hidden;color:#000820">Có</div>
<div class="t" style="left:181px;top:444px;width:43px;text-align:right">19</div>
<div class="t" style="left:227px;top:444px">01</div>
<div class="t" style="left:284px;top:444px">Banco Santander</div>
<div class="t" style="left:465px;top:444px;width:79px;text-align:right">6,860.94</div>
<div class="a" style="left:546px;top:441px;width:19px;height:16px;background:#0A246A"></div>
<div class="a" style="left:550px;top:444px;width:11px;height:11px;background:#fff"></div>
<div class="a" style="left:181px;top:531px;width:399px;height:16px;background-color:#E8E6E2;background-image:repeating-conic-gradient(#F6F5F2 0 25%,#DAD7D1 0 50%);background-size:2px 2px"></div>
<div class="a" style="left:181px;top:531px;width:16px;height:16px;background:#D4D0C8;border:1px solid #1a1a1a"></div>
<div class="a" style="left:196px;top:531px;width:220px;height:16px;background:#D4D0C8;border:1px solid #1a1a1a"></div>
<div class="a" style="left:564px;top:531px;width:16px;height:16px;background:#D4D0C8;border:1px solid #1a1a1a"></div>
<div class="a" style="left:186px;top:535px;width:0;height:0;border-top:3.5px solid transparent;border-bottom:3.5px solid transparent;border-right:4px solid #000"></div>
<div class="a" style="left:570px;top:535px;width:0;height:0;border-top:3.5px solid transparent;border-bottom:3.5px solid transparent;border-left:4px solid #000"></div>
<div class="t l" style="left:593px;top:410px">Nombre del fichero:</div>
<div class="a" style="left:593px;top:430px;width:95px;height:19px;background:#F0FAFF;border-top:1px solid #808080;border-left:1px solid #808080;border-right:1px solid #fff;border-bottom:1px solid #fff;box-shadow:inset 1px 1px 0 #404040"></div>
<div class="t" style="left:596px;top:434px;letter-spacing:-0.3px">Norma19.txt</div>
<div class="a" style="left:667px;top:432px;width:19px;height:15px;background:#D4D0C8;border-right:1px solid #404040;border-bottom:1px solid #404040;box-shadow:inset 1px 1px 0 #fff"></div>
<svg class="a" style="left:670px;top:434px" width="14" height="11" viewBox="0 0 14 11"><path d="M1 2.5 H5 L6 3.5 H10 V5 M1 2.5 V10 H10.5 L13 5 H3.5 L1 10" fill="#f8f8f0" stroke="#000" stroke-width="1"/><path d="M8 0.5 Q11 0 12 3" fill="none" stroke="#000" stroke-width="0.9"/></svg>
<div class="a" style="left:593px;top:454px;width:72px;height:24px;background:#D4D0C8;border-top:1px solid #fff;border-left:1px solid #fff;border-right:1px solid #404040;border-bottom:1px solid #404040;box-shadow:inset -1px -1px 0 #808080"></div>
<div class="t" style="left:593px;top:460px;width:72px;text-align:center">Remesar</div>
<div class="t l" style="left:593px;top:490px">Fecha cobro:</div>
<div class="a" style="left:593px;top:508px;width:91px;height:18px;background:#F0FAFF;border:1px solid #70C0F0"></div>
<div class="t" style="left:595px;top:510px;letter-spacing:0.3px">31/12/2012</div>
<div class="a" style="left:668px;top:510px;width:14px;height:14px;background:#D4D0C8"></div>
<div class="a" style="left:671px;top:515px;width:0;height:0;border-left:3.5px solid transparent;border-right:3.5px solid transparent;border-top:4px solid #000"></div>
<div class="t" style="left:15px;top:564px;width:59px;overflow:hidden">Desc. Banco</div>
<div class="a" style="left:74px;top:560px;width:152px;height:18px;background:#C8C8C8;border:1px solid #60B0E0"></div>
<div class="t" style="left:76px;top:562px;">Banco Santander</div>
<div class="t" style="left:277px;top:564px">Desc. Lin. Desc.</div>
<div class="a" style="left:358px;top:560px;width:152px;height:18px;background:#C8C8C8;border:1px solid #60B0E0"></div>
<div class="a" style="left:4px;top:586px;width:1016px;height:16px;border-top:1px solid #808080;border-left:1px solid #808080;border-bottom:1px solid #fff;border-right:1px solid #fff"></div>
<div class="t" style="left:5px;top:588px">Mostrando 13 registro(s) sobre un total global de 16 existentes en la base de datos.</div>
<svg class="a" style="left:1007px;top:590px" width="12" height="12" viewBox="0 0 12 12"><path d="M11 1 L1 11 M11 5 L5 11 M11 9 L9 11" stroke="#808080" stroke-width="1.2"/><path d="M11 2.5 L2.5 11 M11 6.5 L6.5 11" stroke="#fff" stroke-width="0.8"/></svg>
</body></html>
